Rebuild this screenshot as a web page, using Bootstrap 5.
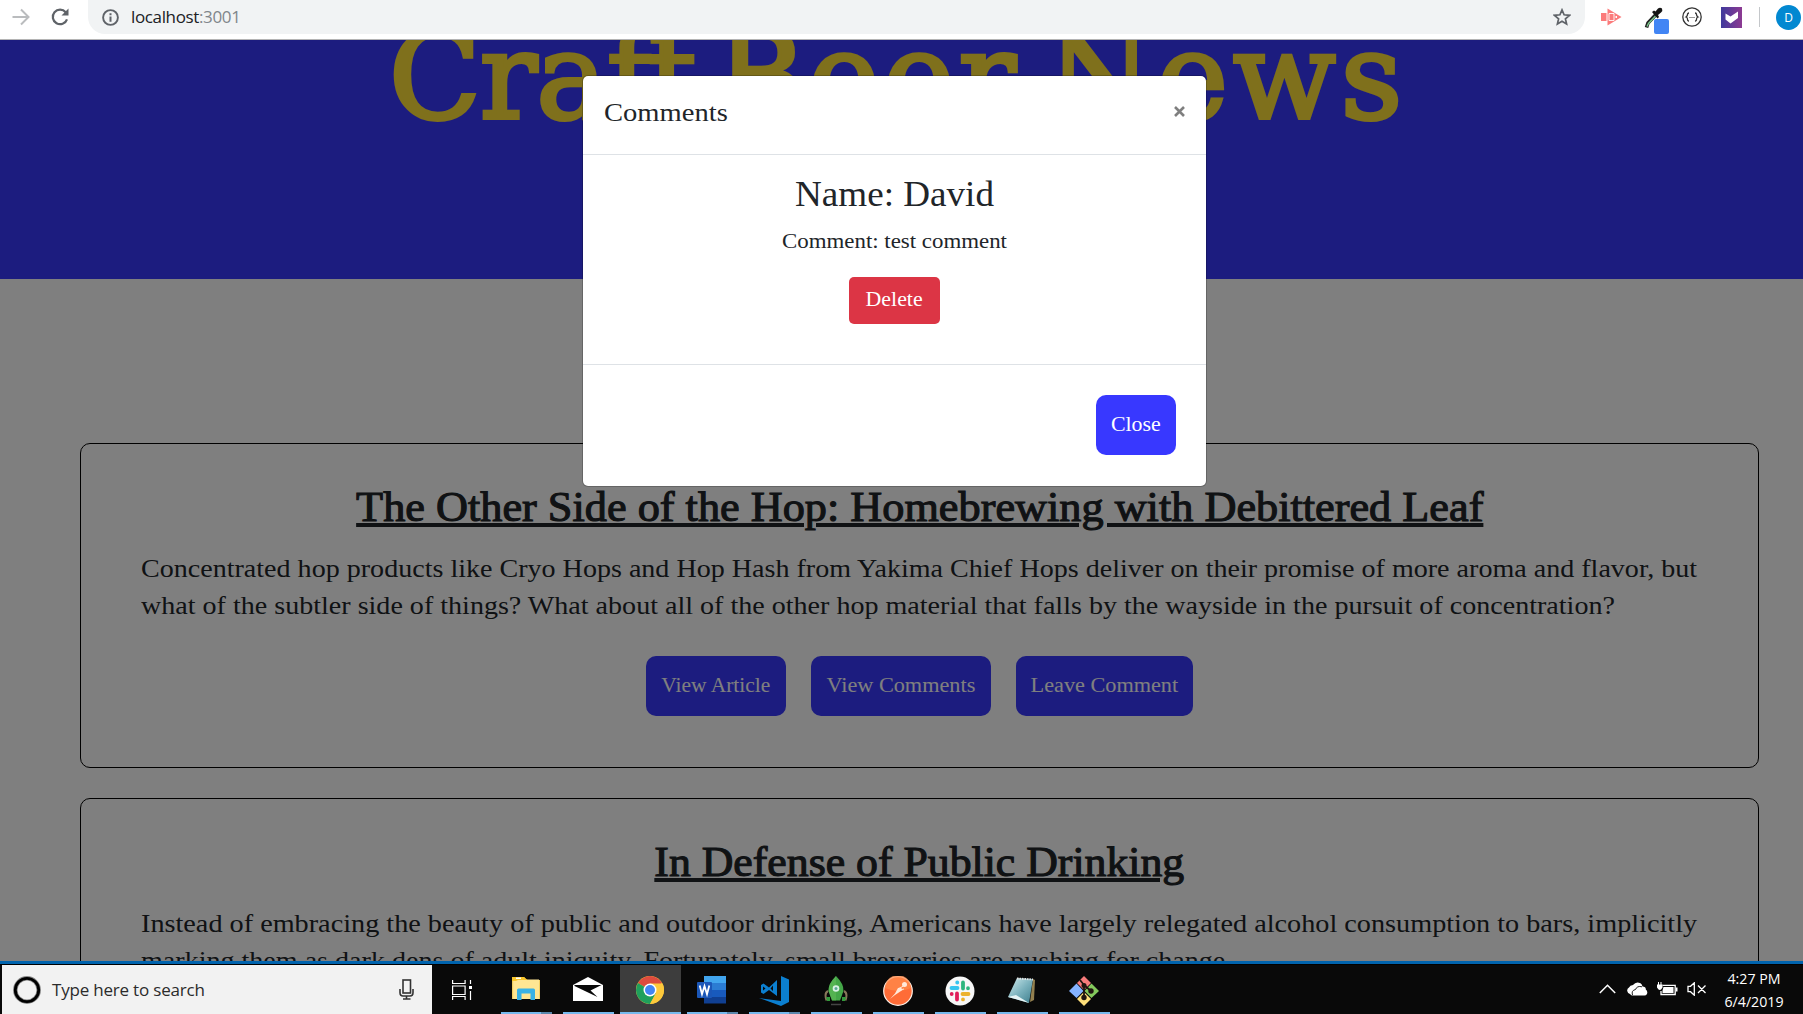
<!DOCTYPE html>
<html lang="en">
<head>
<meta charset="utf-8">
<meta name="viewport" content="width=device-width, initial-scale=1">
<title>Craft Beer News</title>
<link href="https://cdn.jsdelivr.net/npm/bootstrap@5.3.0/dist/css/bootstrap.min.css" rel="stylesheet">
<style>
  body { height: 1014px; font-family: "Liberation Serif", serif; font-size: 20px; color: #212529; }
  svg { display: block; flex: none; }
  .ui-font { font-family: "Open Sans", "Noto Sans", sans-serif; }

  /* browser toolbar */
  .browser-bar { height: 40px; background: #fff; border-bottom: 1px solid #b4b4b4; padding: 0 2px 5px 11px; }
  .address { height: 34px; margin-left: 18px; width: 1497px; padding: 0 14px 0 14px; background: #f1f3f4; border-radius: 0 0 17px 17px; }
  .url { font-size: 17px; line-height: 34px; letter-spacing: -.36px; margin-left: 12px; color: #202124; }
  .url span { color: #80868b; }
  .avatar { width: 25px; height: 25px; border-radius: 50%; background: #0288d1; color: #fff; font-size: 12px; line-height: 25px; margin-left: 16px; }
  .bar-rule { width: 1px; height: 20px; background: #c4c7ca; margin-left: 17px; }

  /* news page */
  .page { min-height: 0; background: #fff; }
  .hero { height: 239px; background: #3838ff; overflow: hidden; padding-left: 389px; }
  .hero h1 { margin: -38px 0 0; font: 120px/150px "DejaVu Serif", serif; color: #ffe038; -webkit-text-stroke: 4px #ffe038; white-space: nowrap; }
  .word-1 { letter-spacing: -1px; margin-right: 23px; }
  .word-1 span { letter-spacing: -3px; }
  .word-2 { letter-spacing: 4px; margin-right: 27px; }
  .word-3 { letter-spacing: 5px; }
  .articles { padding: 164px 44px 0 80px; gap: 30px; }
  .article { height: 325px; border: 1px solid #000; border-radius: 10px; padding: 38px 60px 0; }
  .article h2 { font-size: 42px; line-height: 50px; font-weight: 400; margin: 0 0 18px; -webkit-text-stroke: 1.1px #212529; text-decoration: underline; text-decoration-thickness: 4px; text-underline-offset: 2px; }
  .article p { font-size: 25px; line-height: 37px; margin: 0 0 32px; white-space: nowrap; }
  .article p span { display: inline-block; transform-origin: 0 0; vertical-align: top; }
  .fit { display: inline-block; }
  .btn-news { height: 60px; border: 0; border-radius: 10px; padding: 0 0 2px; background: #3838ff; color: #fff; font-size: 20px; line-height: 56px; white-space: nowrap; }
  .btn-row { gap: 25px; }
  .x-104 { transform: scaleX(1.042); }
  .x-105 { transform: scaleX(1.054); }
  .x-106 { transform: scaleX(1.061); }
  .x-107 { transform: scaleX(1.072); }
  .x-109 { transform: scaleX(1.093); }
  .x-111 { transform: scaleX(1.112); }
  .x-112 { transform: scaleX(1.1225); }
  .x-113 { transform: scaleX(1.129); }
  .x-114 { transform: scaleX(1.143); transform-origin: 0 0; }
  .x-114c { transform: scaleX(1.144); }

  /* comments dialog */
  .shade { position: absolute; inset: 0; background: rgba(0,0,0,.5); }
  .dialog { position: absolute; top: 35px; left: 582px; width: 625px; border: 1px solid rgba(0,0,0,.2); background: #fff; background-clip: padding-box; border-radius: 6px; }
  .dialog-head { height: 79px; padding: 18px 21px 0; border-bottom: 1px solid #dee2e6; }
  .dialog-head h5 { font-size: 25px; line-height: 37px; font-weight: 400; margin: 0; }
  .dialog-body { height: 209px; padding-top: 19px; }
  .dialog-body h2 { font-size: 35px; line-height: 42px; font-weight: 400; margin: 0 0 10px; }
  .dialog-body p { line-height: 30px; margin: 0 0 21px; }
  .dialog-body .btn { width: 91px; height: 47px; padding: 0 0 3px; font-size: 20px; line-height: 42px; background: #dc3545; border: 0; border-radius: 5px; }
  .dialog-foot { height: 122px; padding: 30px; border-top: 1px solid #dee2e6; }

  /* taskbar */
  .taskbar { height: 53px; background: #090909; border-top: 3px solid #0063ad; box-shadow: inset 0 1px #000; padding-left: 2px; }
  .task-search { width: 430px; height: 49px; margin-top: 1px; padding: 0 18px 0 11px; background: #f2f2f2; color: #2b2b2b; font-size: 17px; }
  .task-search span { letter-spacing: -.2px; margin-left: 11px; line-height: 48px; }
  .tile { width: 51px; height: 49px; margin: 1px 11px 0 0; padding-top: 11px; border-bottom: 2px solid #76b9ed; }
  .tile svg { margin: auto; }
  .tile-many { border-image: linear-gradient(90deg, #76b9ed 78%, #5b87ac 78%) 1; border-width: 0 0 2px; border-style: solid; }
  .tile-on { width: 61px; background: #3d3d3d; margin: 1px 6px 0 -5px; }
  .clock { color: #fff; font-size: 14.2px; line-height: 23px; width: 60px; margin: 1px 19px 0 17px; }
</style>
</head>
<body class="d-flex flex-column overflow-hidden">

<header class="browser-bar ui-font d-flex align-items-center flex-shrink-0">
  <svg width="20" height="18" viewBox="0 0 20 18" fill="none" stroke="#babcbe" stroke-width="2"><path d="M1.500 9H17M10 1.500L17.500 9L10 16.500"/></svg>
  <svg class="ms-auto" width="20" height="20" viewBox="0 0 20 20"><path d="M15.700 5.200A7.300 7.300 0 1 0 17 12.300" fill="none" stroke="#5f6368" stroke-width="2.200"/><path d="M18.500 1.500V8.500H11.500Z" fill="#5f6368"/></svg>
  <div class="address d-flex align-items-center">
    <svg width="17" height="17" viewBox="0 0 17 17"><circle cx="8.500" cy="8.500" r="7.400" fill="none" stroke="#5f6368" stroke-width="1.900"/><path d="M7.500 4.200h2v2h-2zM7.500 7.500h2v5.200h-2z" fill="#5f6368"/></svg>
    <div class="url">localhost<span>:3001</span></div>
    <svg class="ms-auto" width="18" height="18" viewBox="0 0 18 18"><path d="M9 1.900L11.100 6.800L16.500 7.300L12.400 10.800L13.600 16L9 13.200L4.400 16L5.600 10.800L1.500 7.300L6.900 6.800Z" fill="none" stroke="#5f6368" stroke-width="1.700"/></svg>
  </div>
  <svg style="margin-left:16px" width="21" height="18" viewBox="0 0 21 18" fill="#fb7b7b"><path d="M0 5h5.500v8H0z"/><path d="M6.500 .5L20.500 9L6.500 17.500z"/><path d="M8 5.500h5v7H8z" fill="none" stroke="#fff" stroke-width=".9"/><path d="M14.500 8h1.500v2h-1.500z" fill="#fff"/></svg>
  <svg style="margin-left:22px;margin-top:6px" width="26" height="29" viewBox="0 0 26 29"><path d="M12.500 8L4 17L2.500 21.500" stroke="#222" stroke-width="3.600" fill="none"/><path d="M11.500 10L4.500 17.500L3 20.500" stroke="#7ac88b" stroke-width="1.400" fill="none"/><path d="M8 6l2-1.500 1.500 1L14 2.500q2-1.500 4 0 1 2-1 4L14 9l1 2-1.500 1.500z" fill="#151515"/><rect x="10" y="13" width="15" height="15" rx="2" fill="#4285f4"/></svg>
  <svg style="margin-left:12px" width="20" height="20" viewBox="0 0 20 20" fill="none" stroke="#333"><circle cx="10" cy="10" r="9.200" stroke-width="1.300"/><path d="M7 6Q5.500 6 5.500 7.500T4 10Q5.500 10.500 5.500 12.300T7 14M13 6Q14.500 6 14.500 7.500T16 10Q14.500 10.500 14.500 12.300T13 14" stroke-width="1.300"/><path d="M7.500 10.500h5" stroke-dasharray="1 1"/></svg>
  <svg style="margin-left:19px" width="21" height="21" viewBox="0 0 21 21"><defs><linearGradient id="vio" x1="0" x2="1"><stop stop-color="#3f3a9c"/><stop offset="1" stop-color="#8d3a92"/></linearGradient></defs><path d="M0 0h21v21H0z" fill="url(#vio)"/><path d="M4.500 6.500l5 3L17 4.500v6.500L9.500 16.500L4.500 12.500z" fill="#fff"/></svg>
  <div class="bar-rule"></div>
  <div class="avatar text-center">D</div>
</header>

<main class="page position-relative flex-fill overflow-hidden">
  <section class="hero"><h1 class="d-flex"><span class="word-1">Cra<span>ft</span></span> <span class="word-2">Beer</span> <span class="word-3">News</span></h1></section>
  <section class="articles d-flex flex-column">
    <article class="article d-flex flex-column align-items-center">
      <h2 class="x-105 text-nowrap">The Other Side of the Hop: Homebrewing with Debittered Leaf</h2>
      <p class="align-self-start"><span class="x-112">Concentrated hop products like Cryo Hops and Hop Hash from Yakima Chief Hops deliver on their promise of more aroma and flavor, but</span><br><span class="x-112">what of the subtler side of things? What about all of the other hop material that falls by the wayside in the pursuit of concentration?</span></p>
      <div class="btn-row d-flex justify-content-center">
        <button class="btn btn-news" style="width:140px"><span class="fit x-107">View Article</span></button>
        <button class="btn btn-news" style="width:180px"><span class="fit x-111">View Comments</span></button>
        <button class="btn btn-news" style="width:177px"><span class="fit x-111">Leave Comment</span></button>
      </div>
    </article>
    <article class="article d-flex flex-column align-items-center">
      <h2 class="x-104 text-nowrap">In Defense of Public Drinking</h2>
      <p class="align-self-start"><span class="x-113">Instead of embracing the beauty of public and outdoor drinking, Americans have largely relegated alcohol consumption to bars, implicitly</span><br><span class="x-112">marking them as dark dens of adult iniquity. Fortunately, small breweries are pushing for change.</span></p>
    </article>
  </section>

  <div class="shade"></div>
  <div class="dialog" role="dialog">
    <div class="dialog-head d-flex justify-content-between">
      <h5 class="x-114">Comments</h5>
      <svg style="margin-top:12px" width="11" height="11" viewBox="0 0 11 11" stroke="#7f7f7f" stroke-width="2.600"><path d="M1 1L10 10M10 1L1 10"/></svg>
    </div>
    <div class="dialog-body text-center">
      <h2 class="x-106">Name: David</h2>
      <p class="x-114c">Comment: test comment</p>
      <button class="btn btn-danger"><span class="fit x-109">Delete</span></button>
    </div>
    <div class="dialog-foot d-flex justify-content-end">
      <button class="btn btn-news" style="width:80px"><span class="fit x-109">Close</span></button>
    </div>
  </div>
</main>

<footer class="taskbar ui-font d-flex flex-shrink-0">
  <div class="task-search d-flex align-items-center">
    <svg width="28" height="28" viewBox="0 0 28 28"><circle cx="14" cy="14" r="11.700" fill="none" stroke="#888" stroke-width="4.500"/><circle cx="14" cy="14" r="11.700" fill="none" stroke="#000" stroke-width="2.800"/></svg>
    <span>Type here to search</span>
    <svg class="ms-auto" width="15" height="21" viewBox="0 0 15 21" fill="none" stroke="#333" stroke-width="1.600"><rect x="4" y="1" width="7.500" height="13"/><path d="M1 10v3.500q0 3.500 3 3.500h7q3 0 3-3.500V10M7.500 17v3M4 20h7.500"/></svg>
  </div>
  <svg style="margin:16px 28px 0 20px" width="21" height="20" viewBox="0 0 21 20" fill="none" stroke="#fff" stroke-width="1.200"><path d="M.6 0v3.500h12.500V0M.6 6h12.500v8.500H.6zM.6 20v-3.500h12.500V20M18.500 0v4M18.500 11v9"/><path d="M17 6h3v3h-3z" fill="#fff" stroke="none"/></svg>

  <div class="tile tile-many"><svg style="margin-left:11px" width="28" height="26" viewBox="0 0 28 26"><path d="M1 1h11l2 2.500h13V23H1z" fill="#ffe693"/><path d="M0 1h12l3.500 3H6L4 5H0z" fill="#f9c62c"/><path d="M4 1.500h5v1.500H4z" fill="#fff"/><path d="M0 5h1.200v18H0zM27 4h1v19h-1z" fill="#f2cf62"/><path d="M5 14q0-1.500 1.500-1.500h15Q23 12.500 23 14v10h-4.500v-6.500h-9V24H5z" fill="#39b2e5"/></svg></div>
  <div class="tile"><svg style="margin-left:10px" width="30" height="26" viewBox="0 0 30 26"><path d="M0 9L15 1L30 9V25H0z" fill="#fff"/><path d="M1.500 9h27L17.500 14.500L24.500 21L1.500 10z" fill="#080808"/></svg></div>
  <div class="tile tile-on"><svg style="margin-left:16px" width="28" height="28" viewBox="0 0 28 28"><circle cx="14" cy="14" r="14" fill="#fdc93b"/><path d="M14 14L1.900 7A14 14 0 0 1 26.100 7z" fill="#dd4b3e"/><path d="M14 14L1.900 7A14 14 0 0 0 14 28L20 17.500z" fill="#1fa05c"/><path d="M14 7.500H26.400A14 14 0 0 1 14 28L19.700 17.300z" fill="#fdc93b"/><circle cx="14" cy="14" r="6.500" fill="#fff"/><circle cx="14" cy="14" r="5" fill="#4285f4"/></svg></div>
  <div class="tile tile-many"><svg style="margin-left:10px" width="29" height="28" viewBox="0 0 29 28"><path d="M7 0h22v7H7z" fill="#41a5ee"/><path d="M7 7h22v7H7z" fill="#2b7cd3"/><path d="M7 14h22v7H7z" fill="#185abd"/><path d="M7 21h22v6.500H7z" fill="#103f91"/><rect y="6" width="15" height="16" rx="1" fill="#1b57b8"/><path d="M2.700 9.500L5 18.200L7.500 10L10 18.200L12.300 9.500" fill="none" stroke="#fff" stroke-width="1.800"/></svg></div>
  <div class="tile tile-many"><svg style="margin-left:10px" width="30" height="30" viewBox="0 0 30 30" fill="#0b7fd0"><path d="M22 0L30 3.500V26L22 30L0 22L22 25z"/><path d="M18 4V20L10 14L4.500 18L2 16.500V9L4.500 7.500L10 11.500zM14 9.500L11.500 12.500L14 15zM4 10.500v4L6.500 12.500z" fill-rule="evenodd"/></svg></div>
  <div class="tile"><svg style="margin-left:13px" width="24" height="30" viewBox="0 0 24 30"><path d="M4 15Q0 17 2.500 24.500M20 15Q24 17 21.500 24.500" fill="none" stroke="#88765a" stroke-width="2"/><path d="M12 0Q20 8 19.500 15L16 24.500H8L4.500 15Q4 8 12 0z" fill="#44a748"/><path d="M2 21h4v4H3zM18 21h4l-1 4h-3z" fill="#329a3b"/><path d="M12 0V24.500H8L4.500 15Q4 8 12 0" fill="#5fba59" opacity=".6"/><circle cx="12" cy="12.500" r="3.300" fill="#d9f1e5"/><circle cx="12" cy="12.500" r="1.500" fill="#5ba693"/><path d="M7 28.500h10" stroke="#454545" stroke-width="1.500"/></svg></div>
  <div class="tile"><svg style="margin-left:10px" width="30" height="30" viewBox="0 0 30 30"><circle cx="15" cy="15" r="14.300" fill="#ff6c37" stroke="#fff1e8" stroke-width="1.200"/><path d="M2 12A13 13 0 0 1 28 12Q15 18 2 12" fill="#ff8c4b" opacity=".7"/><path d="M7 23L12 17.500L15 12L18 11.500L19.500 14L12 19z" fill="#ffe8da"/><path d="M16 12.500L20.500 10M17 14L21 13" stroke="#ffe8da"/><circle cx="21.500" cy="8.500" r="2.500" fill="#ffe8da"/></svg></div>
  <div class="tile"><svg style="margin-left:10px" width="30" height="30" viewBox="0 0 30 30"><circle cx="15" cy="15" r="14.500" fill="#f7f7f7"/><g fill="none" stroke-width="3.800" stroke-linecap="round"><path d="M6.500 12h6M12.200 6.500h.1" stroke="#36c5f0"/><path d="M18 6.500v6M23 12.200v.1" stroke="#2eb67d"/><path d="M17.500 18h6M18 23.300v.1" stroke="#ecb22e"/><path d="M12 17.500v6M6.700 18v.1" stroke="#e01e5a"/></g></svg></div>
  <div class="tile"><svg style="margin-left:10px" width="28" height="28" viewBox="0 0 28 28"><defs><linearGradient id="pad" x1="0" y1="0" x2="1" y2="1"><stop stop-color="#d4eef0"/><stop offset=".5" stop-color="#7eb4bf"/><stop offset="1" stop-color="#3c7d8c"/></linearGradient></defs><path d="M26 3l2 1-1 20-4 2z" fill="#93804f"/><path d="M10 2L26 3L22 27L1 21z" fill="url(#pad)"/><path d="M1 21L9 19L22 27z" fill="#e6f4f5"/><path d="M10 2.500L26 3.500" stroke="#e3e3e3" stroke-width="2" stroke-dasharray="1.500 1"/></svg></div>
  <div class="tile"><svg style="margin-left:10px" width="30" height="30" viewBox="0 0 30 30"><path d="M15 0l7 7-7 7-7-7z" fill="#f77b7b"/><path d="M7.500 7.500L14.500 15L7.500 22L0 15z" fill="#85b3ff"/><path d="M22.500 7.500L30 15L22.500 22L15.500 15z" fill="#84c95c"/><path d="M15 16l7 7-7 7-7-7z" fill="#ffe07b"/><path d="M11 4L15 9V22M15 9L22 15" stroke="#201510" stroke-width="1.800" fill="none"/><circle cx="15" cy="9.500" r="2.500" fill="#201510"/><circle cx="15" cy="21.500" r="2.700" fill="#201510"/><circle cx="22" cy="15" r="2.700" fill="#201510"/></svg></div>

  <div class="ms-auto d-flex align-items-center">
    <svg width="17" height="10" viewBox="0 0 17 10" fill="none" stroke="#fff" stroke-width="1.500"><path d="M.8 9L8.500 1.200L16.200 9"/></svg>
    <svg style="margin-left:11px" width="21" height="14" viewBox="0 0 21 14"><path d="M3 12A3.500 3.500 0 0 1 2 5.500Q3 3 6 3Q9-1 13.500 1.200Q15 2 15.500 4.500Q19 4.500 18.800 7.500Q21 9 20 12Q19 13.500 17.500 13.500H6Q4 13.500 3 12z" fill="#fff"/><path d="M5.500 13Q4 8.500 8.500 7.500Q10 3.500 15 4.800" fill="none" stroke="#090909" stroke-width=".9"/></svg>
    <svg style="margin-left:9px" width="21" height="14" viewBox="0 0 21 14"><path d="M5.500 3.300H18.200V12.500H4V9" fill="none" stroke="#fff" stroke-width="1.300"/><path d="M6.500 5h10v6H5.500V8.500zM19 5.500h1.500v4H19zM0 2.500h5.500v3Q4 8 2.800 8T0 5.500zM1 0h1v3H1zM3.500 0h1v3h-1z" fill="#fff"/></svg>
    <svg style="margin-left:9px" width="20" height="14" viewBox="0 0 20 14" fill="none" stroke="#fff" stroke-width="1.300"><path d="M1 4.300H3.500L7.300.8V13.200L3.500 9.700H1zM11 3.500L18.500 11M18.500 3.500L11 11"/></svg>
    <div class="clock text-center text-nowrap">4:27 PM<br>6/4/2019</div>
  </div>
</footer>

<script src="https://cdn.jsdelivr.net/npm/bootstrap@5.3.0/dist/js/bootstrap.bundle.min.js"></script>
</body>
</html>
